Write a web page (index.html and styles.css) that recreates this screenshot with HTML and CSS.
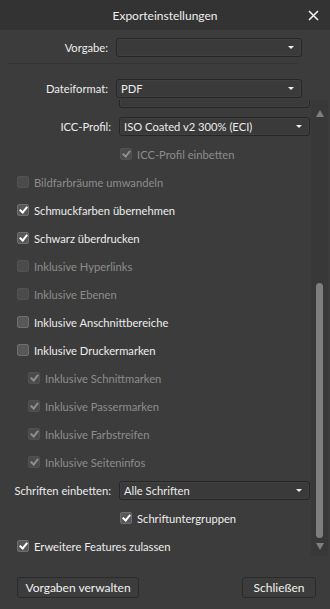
FILE: index.html
```html
<!DOCTYPE html>
<html lang="de">
<head>
    <meta charset="UTF-8">
    <meta name="viewport" content="width=device-width, initial-scale=1.0">
    <title>Exporteinstellungen</title>
    <link rel="stylesheet" href="styles.css">
</head>
<body>
    <div class="dialog">
        <div class="titlebar">
            <span class="title">Exporteinstellungen</span>
            <span class="close">
                <svg width="11" height="11" viewBox="0 0 11 11"><path d="M1 1L10 10M10 1L1 10" stroke="#f0f0f0" stroke-width="1.6"/></svg>
            </span>
        </div>

        <div class="top">
            <div class="field">
                <label>Vorgabe:</label>
                <div class="select"><span></span><i class="caret"></i></div>
            </div>
            <div class="separator"></div>
            <div class="field">
                <label>Dateiformat:</label>
                <div class="select"><span>PDF</span><i class="caret"></i></div>
            </div>
        </div>

        <div class="scroll">
            <div class="content">
                <div class="row field wide">
                    <label></label>
                    <div class="select"><span></span></div>
                </div>
                <div class="row field wide">
                    <label>ICC-Profil:</label>
                    <div class="select"><span>ISO Coated v2 300% (ECI)</span><i class="caret"></i></div>
                </div>
                <div class="row sub disabled"><span class="box checked"></span>ICC-Profil einbetten</div>
                <div class="row disabled"><span class="box"></span>Bildfarbräume umwandeln</div>
                <div class="row"><span class="box checked"></span>Schmuckfarben übernehmen</div>
                <div class="row"><span class="box checked"></span>Schwarz überdrucken</div>
                <div class="row disabled"><span class="box"></span>Inklusive Hyperlinks</div>
                <div class="row disabled"><span class="box"></span>Inklusive Ebenen</div>
                <div class="row"><span class="box"></span>Inklusive Anschnittbereiche</div>
                <div class="row"><span class="box"></span>Inklusive Druckermarken</div>
                <div class="row indent disabled"><span class="box checked"></span>Inklusive Schnittmarken</div>
                <div class="row indent disabled"><span class="box checked"></span>Inklusive Passermarken</div>
                <div class="row indent disabled"><span class="box checked"></span>Inklusive Farbstreifen</div>
                <div class="row indent disabled"><span class="box checked"></span>Inklusive Seiteninfos</div>
                <div class="row field wide">
                    <label>Schriften einbetten:</label>
                    <div class="select"><span>Alle Schriften</span><i class="caret"></i></div>
                </div>
                <div class="row sub"><span class="box checked"></span>Schriftuntergruppen</div>
                <div class="row"><span class="box checked"></span>Erweitere Features zulassen</div>
            </div>
            <div class="scrollbar">
                <i class="arrow up"></i>
                <div class="track"><div class="thumb"></div></div>
                <i class="arrow down"></i>
            </div>
        </div>

        <div class="footer">
            <button>Vorgaben verwalten</button>
            <button>Schließen</button>
        </div>
    </div>
</body>
</html>
```

FILE: styles.css
```css
body {
    margin: 0;
    background-color: #3c3c3c;
    font-family: Lato, "Open Sans", sans-serif;
    font-size: 11.2px;
    color: #ececec;
}
.dialog {
    width: 330px;
    height: 609px;
    display: flex;
    flex-direction: column;
    background-color: #3c3c3c;
}
.titlebar {
    height: 30px;
    flex: none;
    background-color: #333333;
    display: flex;
    align-items: center;
    justify-content: center;
    position: relative;
}
.title {
    font-size: 12px;
    color: #eeeeee;
}
.close {
    position: absolute;
    right: 11px;
    top: 10px;
    width: 11px;
    height: 11px;
}
.close svg {
    display: block;
}
.top {
    padding-top: 8px;
    flex: none;
}
.field {
    display: grid;
    grid-template-columns: 108px 186px;
    column-gap: 8px;
    align-items: center;
}
.field label {
    text-align: right;
    white-space: nowrap;
}
.separator {
    height: 1px;
    background-color: #333333;
    margin: 6px 31px 15px 9px;
}
.select {
    height: 17px;
    border: 1px solid #262626;
    border-radius: 3px;
    background-color: #3a3a3a;
    display: flex;
    align-items: center;
    justify-content: space-between;
    padding: 0 7px 0 4px;
    box-shadow: inset 0 0 0 1px #404040;
}
.caret {
    width: 0;
    height: 0;
    border-left: 3px solid transparent;
    border-right: 3px solid transparent;
    border-top: 3px solid #f0f0f0;
}
.scroll {
    margin-top: 2px;
    height: 456px;
    flex: none;
    display: flex;
    overflow: hidden;
}
.content {
    flex: 1;
    margin-top: -16px;
}
.row {
    height: 28px;
    display: flex;
    align-items: center;
    padding-left: 17px;
    white-space: nowrap;
}
.row.field {
    display: grid;
    padding-left: 0;
}
.row.wide {
    grid-template-columns: 111px 191px;
}
.row.sub {
    padding-left: 120px;
}
.row.indent {
    padding-left: 28px;
}
.disabled {
    color: #8c8c8c;
}
.box {
    width: 10px;
    height: 10px;
    border: 1px solid #6e6e6e;
    border-radius: 2px;
    background-color: #585858;
    margin-right: 5px;
    position: relative;
    flex: none;
}
.disabled .box {
    border-color: #525252;
    background-color: #4b4b4b;
}
.box.checked::after {
    content: "";
    position: absolute;
    left: 3px;
    top: 0px;
    width: 3px;
    height: 6px;
    border-right: 2px solid #ffffff;
    border-bottom: 2px solid #ffffff;
    transform: rotate(40deg);
}
.disabled .box.checked::after {
    border-color: #8e8e8e;
}
.scrollbar {
    width: 17px;
    margin-right: 2px;
    background-color: #383838;
    display: flex;
    flex-direction: column;
    align-items: center;
}
.arrow {
    width: 0;
    height: 0;
    border-left: 4px solid transparent;
    border-right: 4px solid transparent;
}
.arrow.up {
    margin-top: 10px;
    border-bottom: 7px solid #7e7e7e;
}
.arrow.down {
    margin-bottom: 6px;
    border-top: 7px solid #7e7e7e;
}
.track {
    flex: 1;
    width: 7px;
    display: flex;
    flex-direction: column;
    justify-content: flex-end;
    padding-bottom: 5px;
}
.thumb {
    height: 255px;
    background-color: #7e7e7e;
    border-radius: 4px;
}
.footer {
    flex: 1;
    display: flex;
    justify-content: space-between;
    align-items: flex-start;
    padding: 21px 14px 0 17px;
}
button {
    height: 21px;
    padding: 0 4px;
    white-space: nowrap;
    font-family: Lato, "Open Sans", sans-serif;
    font-size: 12px;
    color: #f2f2f2;
    background-color: #3c3c3c;
    border: 1px solid #2a2a2a;
    border-radius: 3px;
}
button:first-child {
    width: 122px;
}
button:last-child {
    width: 74px;
}
```
